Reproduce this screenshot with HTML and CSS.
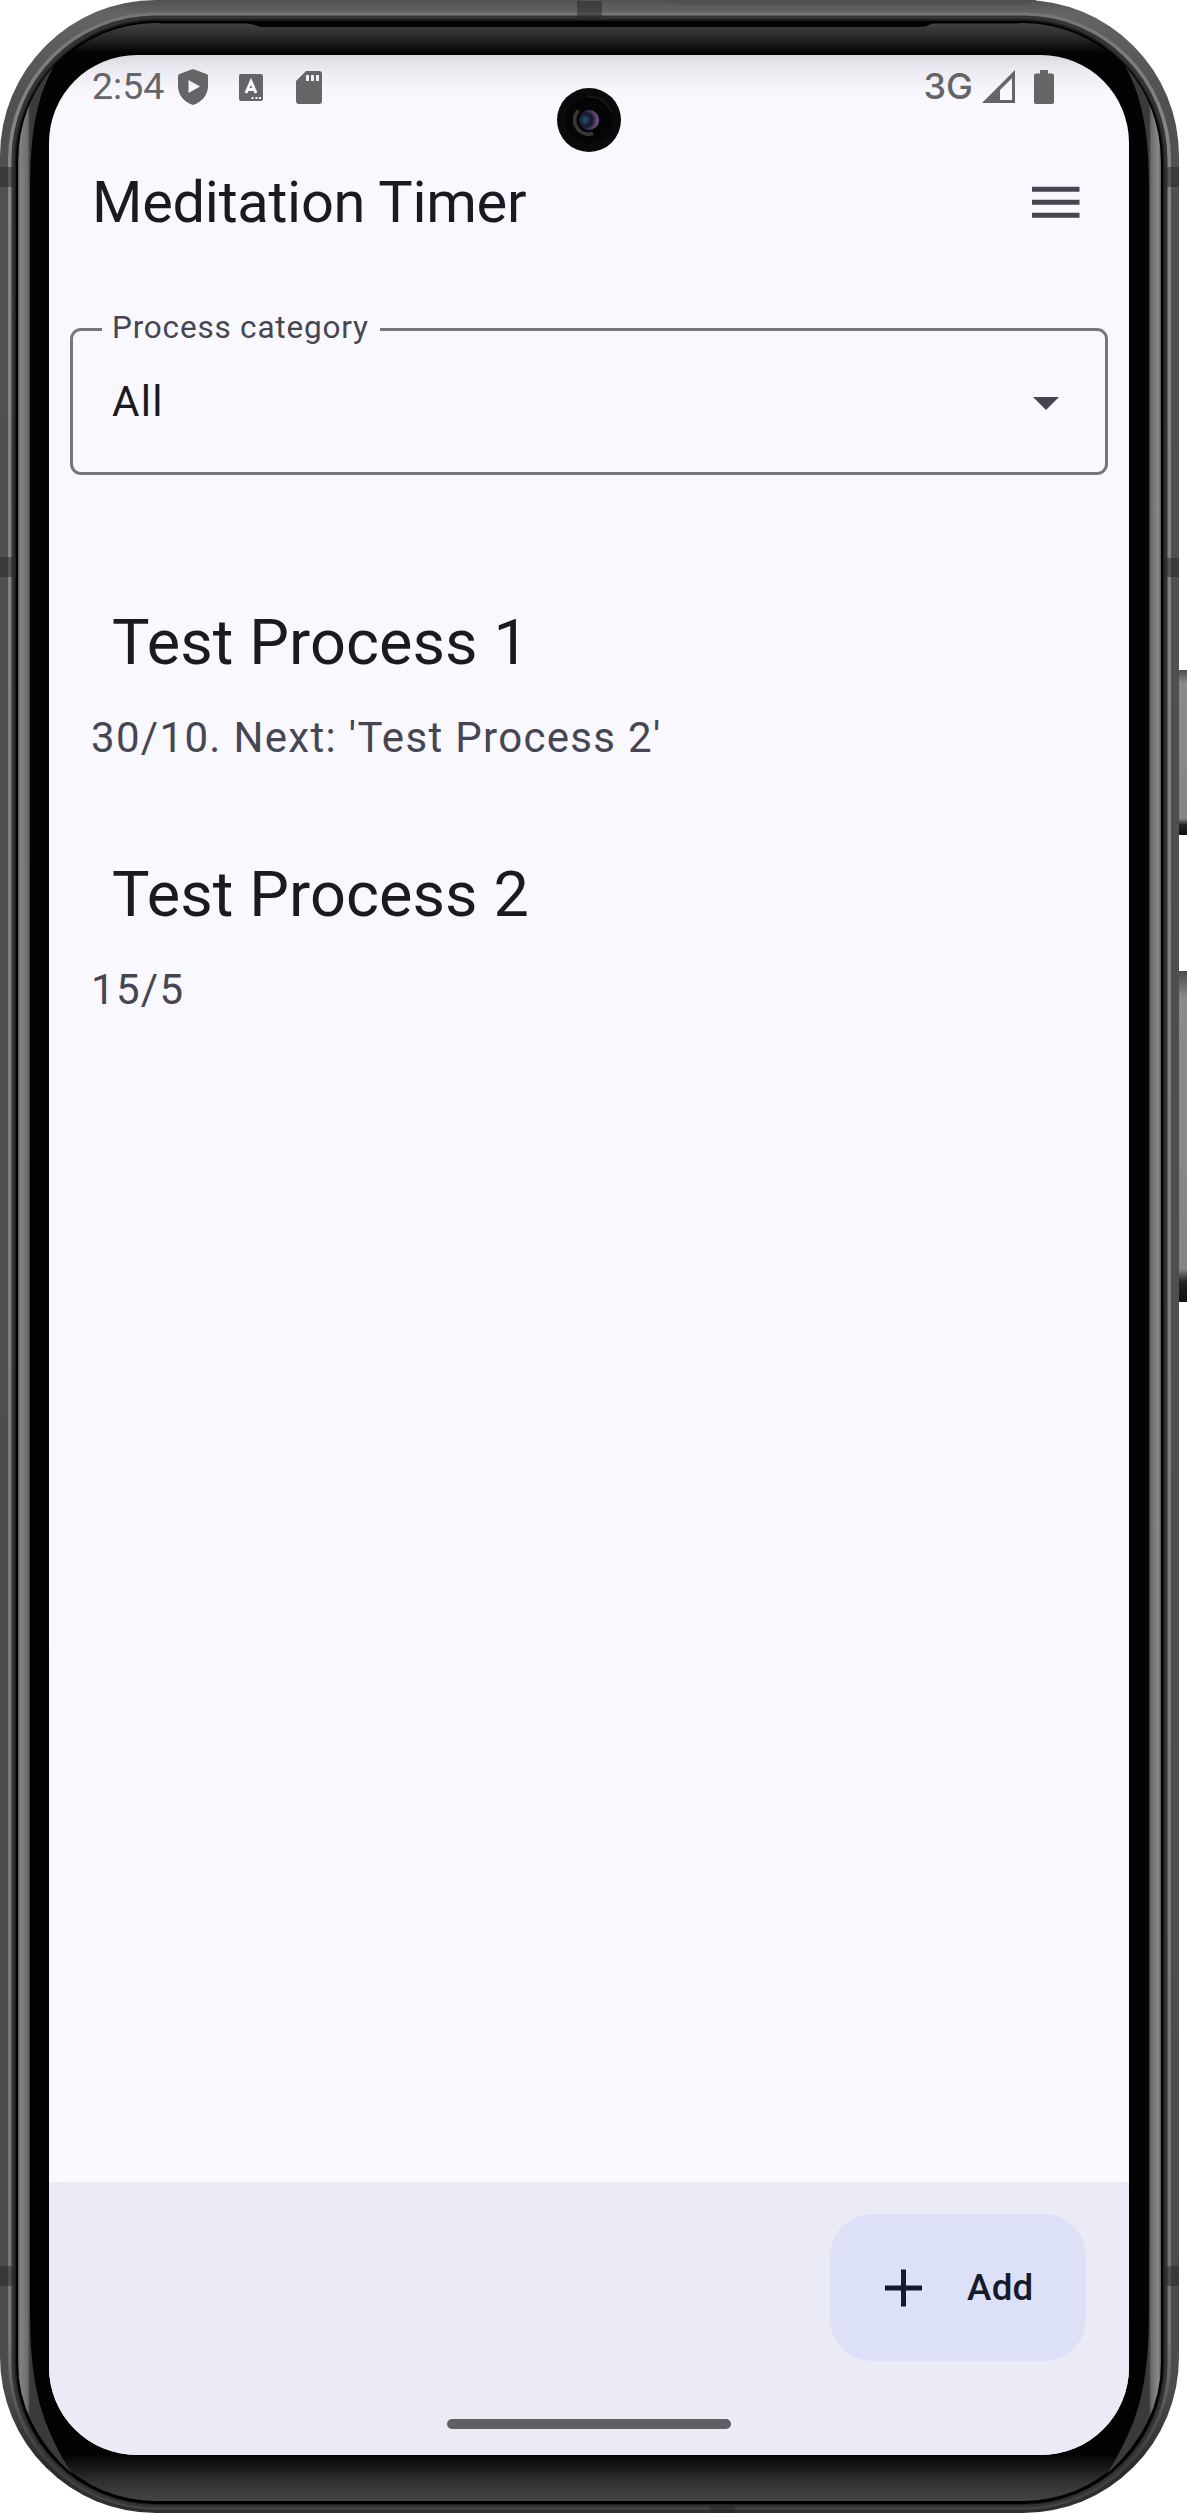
FILE: index.html
```html
<!DOCTYPE html>
<html lang="en">
<head>
<meta charset="utf-8">
<title>Meditation Timer</title>
<link rel="stylesheet" href="styles.css">
</head>
<body>
<div class="device">
  <svg class="frame" viewBox="0 0 1187 2513" aria-hidden="true">
    <defs>
      <linearGradient id="metalV" x1="0" y1="0" x2="0" y2="2513" gradientUnits="userSpaceOnUse">
        <stop offset="0" stop-color="#525252"/><stop offset=".005" stop-color="#646464"/><stop offset=".04" stop-color="#505050"/><stop offset=".95" stop-color="#4c4c4c"/><stop offset=".98" stop-color="#2c2c2c"/><stop offset="1" stop-color="#303030"/>
      </linearGradient>
      <linearGradient id="shine" x1="0" y1="0" x2="0" y2="2513" gradientUnits="userSpaceOnUse">
        <stop offset="0" stop-color="#747474"/><stop offset=".05" stop-color="#858585"/><stop offset=".93" stop-color="#777"/><stop offset=".98" stop-color="#3c3c3c"/><stop offset="1" stop-color="#484848"/>
      </linearGradient>
      <linearGradient id="glass" x1="0" y1="23" x2="0" y2="2501" gradientUnits="userSpaceOnUse">
        <stop offset="0" stop-color="#424242"/><stop offset=".006" stop-color="#282828"/><stop offset=".012" stop-color="#030303"/><stop offset=".981" stop-color="#020202"/><stop offset=".992" stop-color="#303030"/><stop offset="1" stop-color="#454545"/>
      </linearGradient>
      <linearGradient id="glintL" x1="18" y1="0" x2="30" y2="0" gradientUnits="userSpaceOnUse">
        <stop offset="0" stop-color="#555"/><stop offset=".2" stop-color="#818181"/><stop offset=".8" stop-color="#6e6e6e"/><stop offset="1" stop-color="#3a3a3a"/>
      </linearGradient>
      <linearGradient id="glintR" x1="1149" y1="0" x2="1161" y2="0" gradientUnits="userSpaceOnUse">
        <stop offset="0" stop-color="#3a3a3a"/><stop offset=".2" stop-color="#6e6e6e"/><stop offset=".8" stop-color="#8a8a8a"/><stop offset="1" stop-color="#555"/>
      </linearGradient>
      <linearGradient id="key" x1="0" y1="0" x2="0" y2="1">
        <stop offset="0" stop-color="#4a4a4a"/><stop offset=".08" stop-color="#8a8a8a"/><stop offset=".9" stop-color="#858585"/><stop offset=".94" stop-color="#222"/><stop offset="1" stop-color="#111"/>
      </linearGradient>
      <radialGradient id="lens" cx=".3" cy=".5" r=".7">
        <stop offset="0" stop-color="#245266"/><stop offset=".5" stop-color="#16162a"/><stop offset="1" stop-color="#8d5a94"/>
      </radialGradient>
    </defs>
    <rect x="1177" y="670" width="14" height="165" rx="3" fill="url(#key)"/>
    <rect x="1177" y="971" width="14" height="331" rx="3" fill="url(#key)"/>
    <path fill="#555" d="M663 0H1036V6H680Q668 4 663 0Z"/>
    <rect width="1179" height="2513" rx="156" fill="url(#metalV)"/>
    <path fill="#505050" d="M663 0H1036Q1028 4 1015 4.500H690Q674 4.500 663 0Z"/>
    <rect x="8" y="12.500" width="1163" height="2497" rx="147" fill="url(#shine)"/>
    <rect x="11.500" y="15.500" width="1156" height="2492" rx="144" fill="#343434"/>
    <rect x="14.500" y="19" width="1150" height="2486" rx="142" fill="#1c1c1c"/>
    <rect x="16" y="21" width="1147" height="2483" rx="140" fill="#000"/>
    <rect x="18" y="23" width="1143" height="2478" rx="138" fill="url(#glass)"/>
    <path fill="#000" d="M160 23H1019V23.500H932Q926 27 918 27H260Q252 23.500 246 23.500H160Z"/>
    <path fill="url(#glintL)" d="M18 161Q19 105 54 66C38 95 30 128 30 190V2310C30 2390 42 2425 72 2474Q18 2425 18 2363Z"/>
    <path fill="url(#glintR)" d="M1161 161Q1160 105 1125 66C1141 95 1149 128 1149 190V2310C1149 2390 1137 2425 1107 2474Q1161 2425 1161 2363Z"/>
    <g fill="#262626" fill-opacity=".5">
      <path d="M0 167h16v20H0zM0 557h16v20H0zM0 2266h16v20H0zM1163 167h16v20h-16zM1163 558h16v19h-16zM1163 2266h16v20h-16zM577 1h25v19h-25zM710 2504h25v9h-25z"/>
    </g>
  </svg>

  <main class="screen">
    <header class="status">
      <span class="clock">2:54</span>
      <svg class="shield" width="30" height="36" viewBox="0 0 30 36"><path fill="#656567" fill-rule="evenodd" d="M13.500.500Q15 0 16.500.500L28.500 5Q30 5.600 30 7V17C30 26 24 33 15 36 6 33 0 26 0 17V7Q0 5.600 1.500 5ZM10.500 11V24L22 17.500Z"/></svg>
      <svg class="ime" width="24" height="27" viewBox="0 0 24 27"><rect width="24" height="27" rx="2" fill="#656567"/><path d="M7 19 12 7.500 17 19M8.500 15.500H15.500" fill="none" stroke="#f7f6fd" stroke-width="3"/><path d="M12.500 23h2v2h-2zM16.500 23h2v2h-2zM20 23h2v2h-2z" fill="#f7f6fd"/></svg>
      <svg class="card" width="26" height="33" viewBox="0 0 26 33"><path fill="#656567" fill-rule="evenodd" d="M10 0H23Q26 0 26 3V30Q26 33 23 33H3Q0 33 0 30V10ZM10 4V10H13V4ZM15 4V10H18V4ZM20 4V10H23V4Z"/></svg>
      <span class="network">3G</span>
      <svg class="signal" width="33" height="33" viewBox="0 0 33 33"><path fill="#656567" fill-rule="evenodd" d="M33 0V33H0ZM30 8 18 20V30H30Z"/></svg>
      <svg class="battery" width="20" height="34" viewBox="0 0 20 34"><path fill="#656567" d="M6 0H14V3.500H18Q20 3.500 20 5.500V32Q20 34 18 34H2Q0 34 0 32V5.500Q0 3.500 2 3.500H6Z"/></svg>
    </header>

    <div class="topbar">
      <h1 class="title">Meditation Timer</h1>
      <svg class="menu" width="48" height="33" viewBox="0 0 48 33"><path fill="#464652" d="M0 .700h47.500v5H0zM0 13.700h47.500v5H0zM0 26.700h47.500v5H0z"/></svg>
    </div>

    <fieldset class="field">
      <legend class="label">Process category</legend>
      <div class="select">
        <span>All</span>
        <svg class="arrow" width="26" height="13" viewBox="0 0 26 13"><path fill="#464652" d="M0 0H26L13 13Z"/></svg>
      </div>
    </fieldset>

    <section class="list">
      <article class="item">
        <h2 class="name">Test Process 1</h2>
        <p class="detail">30/10. Next: 'Test Process 2'</p>
      </article>
      <article class="item">
        <h2 class="name">Test Process 2</h2>
        <p class="detail">15/5</p>
      </article>
    </section>

    <footer class="bottombar">
      <button class="add">
        <svg width="38" height="38" viewBox="0 0 38 38"><path fill="#151b2c" d="M17 .500h5v16h16v5H22v16h-5v-16H1v-5h16z"/></svg>
        <span>Add</span>
      </button>
      <div class="handle"></div>
    </footer>
  </main>

  <svg class="camera" viewBox="-32 -32 64 64" aria-hidden="true">
    <circle r="32" fill="#0a0a0a"/>
    <circle r="23.500" fill="#050505"/>
    <path d="M-2 -23.500A23.500 23.500 0 0 1 22 -8" fill="none" stroke="#1c1c1c" stroke-width="1.500"/>
    <path d="M-10.500 -9.500A14 14 0 0 0 4 13.500" fill="none" stroke="#383838" stroke-width="3.500"/>
    <circle r="10" fill="url(#lens)"/>
  </svg>
</div>
</body>
</html>
```
FILE: styles.css
```css
* { box-sizing: border-box; margin: 0; padding: 0; }
body { background: #fff; font-family: Roboto, sans-serif; color: #1a1b20; }
.device { position: relative; width: 1187px; height: 2513px; padding: 55px 58px 58px 49px; overflow: hidden; }
.frame { position: absolute; left: 0; top: 0; width: 1187px; height: 2513px; }
.screen {
  position: relative; display: flex; flex-direction: column;
  width: 1080px; height: 2400px; overflow: hidden; border-radius: 88px;
  background: linear-gradient(#d9d8df 0, #ebeaf1 14px, #f9f8ff 38px);
}
.camera { position: absolute; left: 557px; top: 88px; width: 64px; height: 64px; }

.status { display: flex; align-items: center; height: 64px; padding: 0 75px 0 43px; color: #656567; }
.clock { font-size: 37.500px; line-height: 64px; margin-top: -2px; }
.shield { margin-left: 14px; margin-top: -1px; }
.ime { margin-left: 31px; }
.card { margin-left: 33px; }
.network { margin-left: auto; font: 500 36px/64px Inter, sans-serif; margin-top: -3px; }
.signal { margin-left: 9px; margin-top: -1px; }
.battery { margin-left: 19px; margin-top: -1px; }

.topbar { display: flex; align-items: center; justify-content: space-between; height: 167px; padding: 0 49px 0 43px; }
.title { margin-top: -2px; font-size: 57.750px; font-weight: 400; line-height: 74px; letter-spacing: -.25px; }

.field { display: flex; flex-direction: column; height: 166px; margin: 23px 21px 0; padding: 0 46px 0 29px; border: 3px solid #767680; border-radius: 11px; }
.label { height: 40px; padding: 0 11px 0 10px; font-size: 31.500px; line-height: 38px; letter-spacing: .8px; color: #464652; }
.select { display: flex; align-items: center; justify-content: space-between; margin-top: 21px; padding-left: 10px; font-size: 42px; line-height: 63px; letter-spacing: 1.300px; }
.arrow { margin-top: 4px; }

.list { flex: 1; padding: 126px 42px 0; }
.item { height: 252px; }
.name { padding-left: 21px; font-size: 63px; font-weight: 400; line-height: 84px; letter-spacing: .1px; }
.detail { margin-top: 21px; font-size: 42px; line-height: 63px; letter-spacing: 1.320px; color: #464652; }

.bottombar { display: flex; flex-direction: column; height: 273px; padding: 32px 43px 26px; background: #ebebf5; }
.add { display: flex; align-items: center; justify-content: flex-start; align-self: flex-end; gap: 45px; width: 256px; height: 147px; padding-left: 54px; border: 0; border-radius: 42px; background: #dde1f8; color: #151b2c; font: 500 36.750px/52px Roboto, sans-serif; letter-spacing: .26px; }
.handle { align-self: center; width: 284px; height: 10px; margin-top: auto; border-radius: 5px; background: #5f5f65; }
```
